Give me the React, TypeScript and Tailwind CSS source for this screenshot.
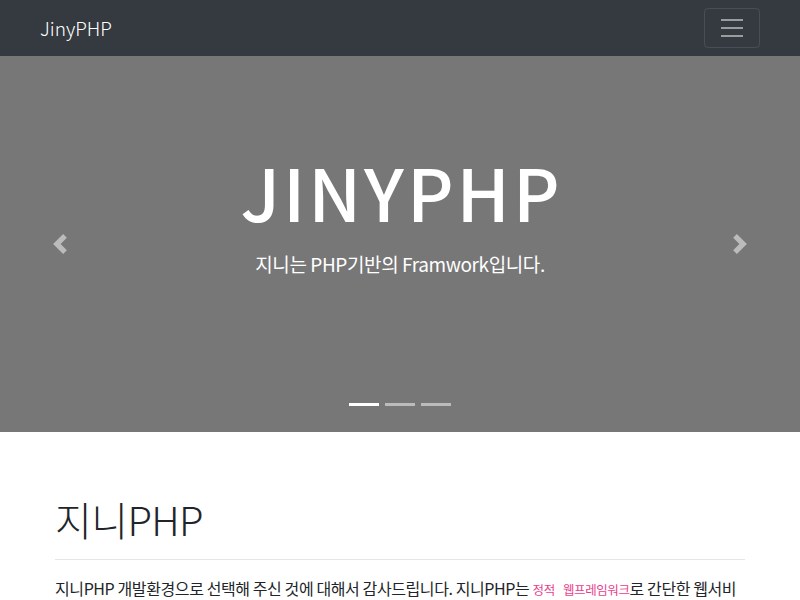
const font = { fontFamily: '"Noto Sans CJK KR", "Noto Sans", sans-serif' };

const Chevron = ({ dir }: { dir: "prev" | "next" }) => (
  <svg width="20" height="20" viewBox="0 0 8 8" fill="#fff">
    {dir === "prev" ? (
      <path d="M5.25 0l-4 4 4 4 1.5-1.5-2.5-2.5 2.5-2.5-1.5-1.5z" />
    ) : (
      <path d="M2.75 0l-1.5 1.5 2.5 2.5-2.5 2.5 1.5 1.5 4-4-4-4z" />
    )}
  </svg>
);

export default function App() {
  return (
    <div className="min-h-screen bg-white text-[#212529]" style={font}>
      <nav className="flex h-[56px] items-center justify-between bg-[#343a40] px-10">
        <a className="text-[19px] font-light text-white">JinyPHP</a>
        <button className="flex h-[40px] w-[56px] items-center justify-center rounded border border-white/10">
          <svg width="30" height="30" viewBox="0 0 30 30">
            <path
              d="M4 7h22M4 15h22M4 23h22"
              stroke="rgba(255,255,255,0.5)"
              strokeWidth="2"
              strokeMiterlimit="10"
            />
          </svg>
        </button>
      </nav>

      <section className="relative flex h-[376px] flex-col items-center justify-center bg-[#777]">
        <h1 className="mt-[-54px] pl-[3px] text-[72px] font-medium leading-none tracking-[3px] text-white">
          JINYPHP
        </h1>
        <p className="mt-[23px] text-[19px] font-normal tracking-[-0.4px] text-white">
          지니는 PHP기반의 Framwork입니다.
        </p>

        <a className="absolute inset-y-0 left-0 flex w-[120px] items-center justify-center opacity-50">
          <Chevron dir="prev" />
        </a>
        <a className="absolute inset-y-0 right-0 flex w-[120px] items-center justify-center opacity-50">
          <Chevron dir="next" />
        </a>

        <ol className="absolute bottom-[26px] left-0 right-0 flex justify-center gap-[6px]">
          <li className="h-[3px] w-[30px] bg-white" />
          <li className="h-[3px] w-[30px] bg-white/50" />
          <li className="h-[3px] w-[30px] bg-white/50" />
        </ol>
      </section>

      <main className="mx-auto max-w-[720px] px-[15px] pt-[63px]">
        <h1 className="mb-[12px] text-[40px] font-light leading-[1.2] tracking-[-0.6px]">지니PHP</h1>
        <hr className="my-4 border-t border-black/10" />
        <p className="text-[16px] leading-[1.5] tracking-[-0.4px]">
          지니PHP 개발환경으로 선택해 주신 것에 대해서 감사드립니다. 지니PHP는{" "}
          <code className="text-[12.5px] text-[#e83e8c]" style={font}>정적</code>{"  "}
          <code className="ml-[5px] text-[12.5px] text-[#e83e8c]" style={font}>웹프레임워크</code>로 간단한
          웹서비스를 쉽게 구축할 수 있도록 도와줍니다.
        </p>
      </main>
    </div>
  );
}
